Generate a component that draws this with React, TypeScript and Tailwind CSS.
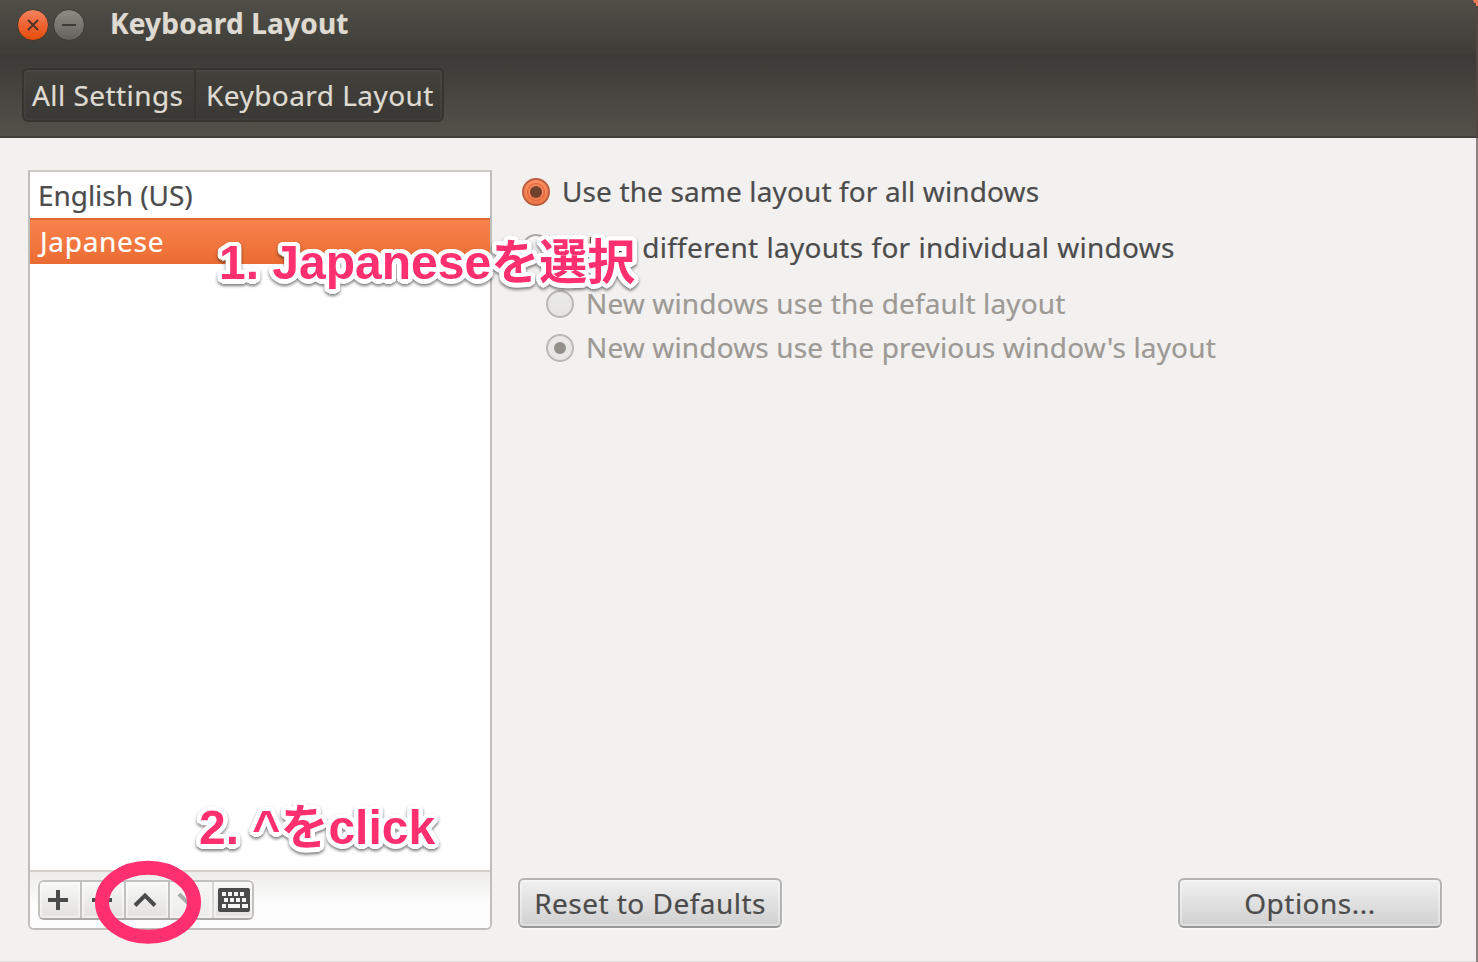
import React from 'react';

const FONT = "font-['Noto_Sans','Open_Sans',sans-serif]";

function Radio({ checked, disabled }: { checked?: boolean; disabled?: boolean }) {
  const id = disabled ? 'radio-off' : checked ? 'radio-on' : 'radio-plain';
  const top = disabled ? '#eaeae8' : checked ? '#ff8f63' : '#fbfbfb';
  const bottom = disabled ? '#e6e5e2' : checked ? '#f07845' : '#dddddd';
  const ring = disabled ? '#bbb8b4' : checked ? '#b86040' : '#aaa7a4';
  const dot = disabled ? '#93908b' : '#70412f';
  return (
    <svg width="32" height="32" viewBox="0 0 32 32" className="shrink-0">
      <defs>
        <linearGradient id={id} x1="0" y1="0" x2="0" y2="1">
          <stop offset="0" stopColor={top} />
          <stop offset="1" stopColor={bottom} />
        </linearGradient>
      </defs>
      <circle cx="16" cy="16.6" r="14" fill="none" stroke="#fff" strokeOpacity="0.6" />
      <circle cx="16" cy="16" r="13" fill={`url(#${id})`} stroke={ring} strokeWidth="2" />
      {checked && !disabled && <circle cx="16" cy="16" r="8.5" fill="none" stroke="#dd6f43" strokeWidth="1.5" />}
      {checked && <circle cx="16" cy="16" r="6" fill={dot} />}
    </svg>
  );
}

function ToolButton({ className, children }: { className: string; children: React.ReactNode }) {
  return (
    <div className={`flex h-full items-center justify-center border-r-2 border-[#c3c1bd] bg-linear-to-b from-[#f8f8f7] to-[#e2e1df] shadow-[inset_0_0_0_2px_rgba(255,255,255,0.45)] last:border-r-0 ${className}`}>
      {children}
    </div>
  );
}

function PushButton({ label, className }: { label: string; className: string }) {
  return (
    <button className="flex h-[50px] w-[264px] items-center justify-center rounded-[6px] border-2 border-[#b4b3b1] border-b-[#999896] bg-linear-to-b from-[#f1f1f1] to-[#d0d0d0] shadow-[inset_0_0_0_2px_rgba(255,255,255,0.35),0_1px_1px_1px_rgba(255,255,255,0.5)]">
      <span className={`whitespace-nowrap ${className}`}>{label}</span>
    </button>
  );
}

function Note({ className, children }: { className: string; children: React.ReactNode }) {
  return (
    <div className={`absolute whitespace-nowrap font-['Liberation_Sans','Noto_Sans_CJK_JP',sans-serif] text-[48px] leading-[48px] font-bold text-[#ff2f70] drop-shadow-[0_2px_1.5px_rgba(0,0,0,0.5)] [text-shadow:4.5px_0_#fff,4.2px_1.7px_#fff,3.2px_3.2px_#fff,1.7px_4.2px_#fff,0_4.5px_#fff,-1.7px_4.2px_#fff,-3.2px_3.2px_#fff,-4.2px_1.7px_#fff,-4.5px_0_#fff,-4.2px_-1.7px_#fff,-3.2px_-3.2px_#fff,-1.7px_-4.2px_#fff,0_-4.5px_#fff,1.7px_-4.2px_#fff,3.2px_-3.2px_#fff,4.2px_-1.7px_#fff,2px_0_#fff,-2px_0_#fff,0_2px_#fff,0_-2px_#fff] ${className}`}>
      {children}
    </div>
  );
}

const KEYS = [
  [4, 10, 16, 22],
  [6, 12, 18, 24],
];

export default function App() {
  return (
    <div className={`relative flex h-[962px] w-[1478px] overflow-hidden bg-[#8d827f] text-[28px] leading-none text-[#4c4c4c] ${FONT}`}>
      <div className="flex h-full w-[1476px] flex-col border-b border-[#dddcda] bg-[#f2f1f0] [-webkit-text-stroke:0.2px_currentColor]">
        <header className="flex h-[54px] shrink-0 items-center bg-linear-to-b from-[#504e47] to-[#3e3d38] pl-[17px]">
          <svg width="68" height="34" viewBox="0 0 68 34" className="mb-[4px] shrink-0">
            <defs>
              <linearGradient id="close" x1="0" y1="0" x2="0" y2="1">
                <stop offset="0" stopColor="#f58560" />
                <stop offset="0.5" stopColor="#ee6333" />
                <stop offset="1" stopColor="#e54b08" />
              </linearGradient>
              <linearGradient id="minimize" x1="0" y1="0" x2="0" y2="1">
                <stop offset="0" stopColor="#8e8c85" />
                <stop offset="1" stopColor="#63615b" />
              </linearGradient>
            </defs>
            <circle cx="16" cy="17" r="15.5" fill="url(#close)" stroke="#393832" />
            <path d="M11 12l10 10M21 12L11 22" stroke="#51332a" strokeWidth="2" />
            <circle cx="52" cy="17" r="15.5" fill="url(#minimize)" stroke="#393832" />
            <path d="M45 17h14" stroke="#3c3b37" strokeWidth="2" />
          </svg>
          <h1 className="mb-[9px] ml-[25px] whitespace-nowrap text-[28px] font-bold tracking-[0.18px] text-[#dfdbd2]">Keyboard Layout</h1>
        </header>

        <nav className="h-[84px] shrink-0 border-b-2 border-[#403f3a] bg-linear-to-b from-[#3b3a36] to-[#53514a] pt-[14px] pl-[22px]">
          <div className="flex h-[54px] w-[422px] rounded-[6px] border-2 border-[#35342f] bg-linear-to-b from-[#42413c] to-[#393834] text-[#dfdbd2] shadow-[inset_0_0_0_2px_rgba(255,255,255,0.03)]">
            <div className="flex w-[172px] items-center border-r-2 border-[#35342f] pl-[8px]">
              <span className="whitespace-nowrap tracking-[0.44px]">All Settings</span>
            </div>
            <div className="flex items-center pl-[10px]">
              <span className="whitespace-nowrap tracking-[0.44px]">Keyboard Layout</span>
            </div>
          </div>
        </nav>

        <main className="flex min-h-0 flex-1 pt-[32px] pl-[28px]">
          <section className="flex h-[760px] w-[464px] shrink-0 flex-col overflow-hidden rounded-b-[6px] border-2 border-[#c0beba] border-t-[#cccac7] bg-white">
            <div className="flex h-[46px] shrink-0 items-center pl-[8px]">
              <span className="whitespace-nowrap tracking-[-0.05px]">English (US)</span>
            </div>
            <div className="flex h-[46px] shrink-0 items-center border-t-2 border-[#e0672f] bg-linear-to-b from-[#f9824c] to-[#eb6c32] pb-[3px] pl-[10px] text-white">
              <span className="whitespace-nowrap tracking-[0.7px]">Japanese</span>
            </div>
            <div className="flex-1" />
            <div className="flex h-[58px] shrink-0 border-t-2 border-[#d3d0cc] bg-linear-to-b from-[#edecea] to-[#fdfdfd] to-60% pt-[8px] pl-[8px]">
              <div className="flex h-[40px] w-[216px] overflow-hidden rounded-[6px] border-2 border-[#c3c1bd] border-b-[#acaaa6]">
                <ToolButton className="w-[42px] pr-[4px]">
                  <svg width="20" height="20" viewBox="0 0 20 20"><path d="M0 10h20M10 0v20" stroke="#4b4b4b" strokeWidth="4" /></svg>
                </ToolButton>
                <ToolButton className="w-[44px] pr-[2px]">
                  <svg width="20" height="20" viewBox="0 0 20 20"><path d="M0 10h20" stroke="#4b4b4b" strokeWidth="4" /></svg>
                </ToolButton>
                <ToolButton className="w-[44px] pr-[4px]">
                  <svg width="24" height="16" viewBox="0 0 24 16"><path d="M2 13.5L12 3.5L22 13.5" fill="none" stroke="#4b4b4b" strokeWidth="4" /></svg>
                </ToolButton>
                <ToolButton className="w-[44px] pr-[4px] opacity-60">
                  <svg width="24" height="16" viewBox="0 0 24 16"><path d="M2 2L12 12L22 2" fill="none" stroke="#777" strokeWidth="4" /></svg>
                </ToolButton>
                <ToolButton className="w-[38px]">
                  <svg width="32" height="24" viewBox="0 0 32 24" className="ml-[2px]">
                    <rect width="32" height="24" rx="2" fill="#4b4b4b" />
                    {KEYS.map((row, r) => row.map((x) => <rect key={`${r}-${x}`} x={x} y={4 + r * 6} width="4" height="4" fill="#f4f4f3" />))}
                    <path d="M4 16h4v4H4zM10 16h12v4H10zM24 16h6v4h-6z" fill="#f4f4f3" />
                  </svg>
                </ToolButton>
              </div>
            </div>
          </section>

          <section className="ml-[26px] flex h-[758px] w-[924px] flex-col">
            <label className="mt-[6px] flex h-[32px] items-center pl-[2px]">
              <Radio checked />
              <span className="mb-[2px] ml-[10px] whitespace-nowrap tracking-[0.12px]">Use the same layout for all windows</span>
            </label>
            <label className="mt-[24px] flex h-[32px] items-center pl-[2px]">
              <Radio />
              <span className="mb-[2px] ml-[10px] whitespace-nowrap tracking-[0.28px] [word-spacing:0.5px]">Allow different layouts for individual windows</span>
            </label>
            <label className="mt-[24px] flex h-[32px] items-center pl-[26px] text-[#9d9994]">
              <Radio disabled />
              <span className="mb-[2px] ml-[10px] whitespace-nowrap tracking-[0.14px]">New windows use the default layout</span>
            </label>
            <label className="mt-[12px] flex h-[32px] items-center pl-[26px] text-[#9d9994]">
              <Radio checked disabled />
              <span className="mb-[2px] ml-[10px] whitespace-nowrap tracking-[0.14px]">New windows use the previous window's layout</span>
            </label>
            <div className="mt-auto flex justify-between">
              <PushButton label="Reset to Defaults" className="tracking-[0.47px]" />
              <PushButton label="Options..." className="tracking-[0.5px]" />
            </div>
          </section>
        </main>
      </div>

      <div className="absolute top-0 right-0 h-[138px] w-[2px] bg-[#514641]" />
      <svg className="absolute top-0 right-0" width="5" height="6" viewBox="0 0 5 6"><path d="M0 0h5v6H3V3H1V1H0z" fill="#f47b58" /></svg>

      <Note className="top-[239px] left-[219px]">1. Japaneseを選択</Note>
      <Note className="top-[804px] left-[199px]">2. ^をclick</Note>
      <svg className="absolute top-[860px] left-[94px]" width="108" height="84" viewBox="0 0 108 84">
        <ellipse cx="54" cy="42.3" rx="46" ry="34.5" fill="none" stroke="#ff2f70" strokeWidth="14" />
      </svg>
    </div>
  );
}
